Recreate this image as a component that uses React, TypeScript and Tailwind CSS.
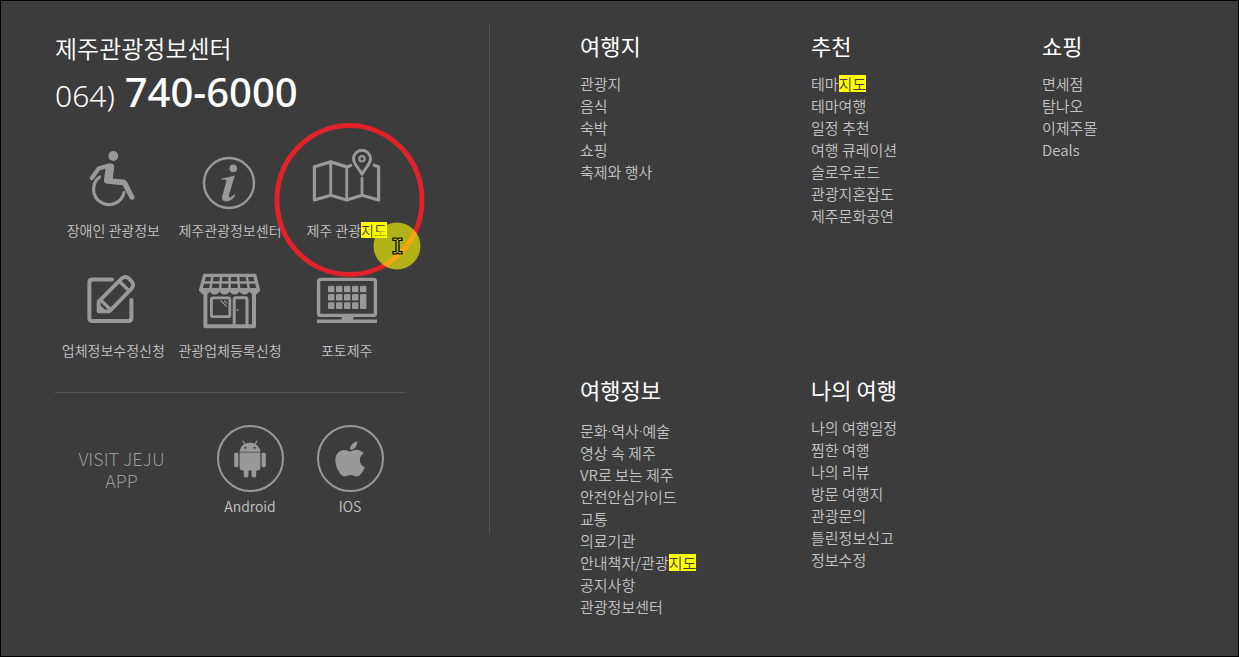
import type { ReactNode } from "react";
import { FaApple } from "react-icons/fa";

const MARK = "지도";

function Dotted({ text }: { text: string }) {
  return (
    <>
      {text.split("·").map((part, i) => (
        <span key={part}>
          {i > 0 && <span className="font-['Noto_Sans',sans-serif]">·</span>}
          {part}
        </span>
      ))}
    </>
  );
}

function Marked({ text, markClass }: { text: string; markClass: string }) {
  if (text.includes("·")) return <Dotted text={text} />;
  if (!text.endsWith(MARK)) return <>{text}</>;
  return (
    <>
      {text.slice(0, -MARK.length)}
      <mark className={markClass}>{MARK}</mark>
    </>
  );
}

function Icon({ children }: { children: ReactNode }) {
  return (
    <svg
      aria-hidden="true"
      width="72"
      height="60"
      viewBox="0 0 72 60"
      fill="none"
      stroke="currentColor"
      strokeWidth="3.2"
      strokeLinecap="round"
      strokeLinejoin="round"
      className="overflow-visible text-[#999999]"
    >
      {children}
    </svg>
  );
}

const WheelchairIcon = () => (
  <Icon>
    <circle cx="36.3" cy="6" r="4.9" fill="currentColor" stroke="none" />
    <path d="M14.8 28 21.6 18.6 32 15.4" strokeWidth="4.2" />
    <path d="M29 14.4 34 13.4Q37.6 13.6 37.2 17L35.8 28.6 46.5 29.4Q49 29.8 50.2 32L57.4 46.6Q58 49.2 55.6 49.8 53.4 50 52.6 48.2L45.6 35.2 30 33.8Q26.4 33.2 27 30Z" fill="currentColor" stroke="none" />
    <path d="M22.6 27A15.4 15.4 0 1 0 47 42.6" />
  </Icon>
);

const InfoIcon = () => (
  <Icon>
    <circle cx="35" cy="33" r="25" strokeWidth="2.4" />
    <circle cx="39.3" cy="18.4" r="3.8" fill="currentColor" stroke="none" />
    <path
      d="M27.6 28.4Q34 27.6 40.8 25.6L35.2 44.4Q34.4 48 36.4 47.4 38 46.8 40 44.2L41.4 45.2Q37.4 51.4 32 51.4 27 51.2 28.2 46L32.4 31.6Q32.8 29.6 30.4 29.6H27.4Z"
      fill="currentColor"
      stroke="none"
    />
  </Icon>
);

const MapIcon = () => (
  <Icon>
    <path d="M39.7 15.5 35.7 16.9 19.7 11.9 3.4 16.7V50L19.7 45.2 35.7 50 51 45.2 67.6 50V16.7L63.2 15.2" strokeWidth="3.2" />
    <path d="M19.7 12V45M35.7 17V50M51 28V45" strokeWidth="2.8" />
    <path d="M51 24.2C48 18.4 42.5 14.4 42.5 8.8A8.5 8.5 0 0 1 59.5 8.8C59.5 14.4 54 18.4 51 24.2Z" strokeWidth="3" />
    <circle cx="51" cy="8.8" r="2.7" strokeWidth="2.2" />
  </Icon>
);

const EditIcon = () => (
  <Icon>
    <path d="M35 9.4H15.4Q12.4 9.4 12.4 12.4V48Q12.4 51 15.4 51H51.4Q54.4 51 54.4 48V30" strokeWidth="4" />
    <path d="M21.6 31.6 45 8.2Q48.4 5.6 51.8 8.4L55 11.8Q57.4 15 54.8 18.4L32.4 41.4H21.6Z" strokeWidth="3.8" />
    <path d="M42.4 11.2 51.8 20.6M24.4 30.6 32.6 38.8" strokeWidth="3.4" />
    <path d="M21.6 35.6 27.4 41.4H21.6Z" fill="currentColor" />
  </Icon>
);

const ShopIcon = () => (
  <Icon>
    <path d="M10.6 5.4H60.8L64.4 20H6.6Z" strokeWidth="3.4" />
    <path d="M8.6 12.4H62.6M18.6 5.4 16.2 20M27.2 5.4 26 20M35.6 5.4V20M44 5.4 45.2 20M52.6 5.4 55 20" strokeWidth="2.5" />
    <path
      d="M5.9 18H65.3V20.4Q64.6 24.4 60.4 24.6 56.4 24.4 55.4 21 54.4 24.4 50.4 24.6 46.4 24.4 45.5 21 44.5 24.4 40.5 24.6 36.5 24.4 35.6 21 34.6 24.4 30.6 24.6 26.6 24.4 25.7 21 24.7 24.4 20.7 24.6 16.7 24.4 15.8 21 14.8 24.4 10.8 24.6 6.5 24.4 5.9 20.4Z"
      fill="currentColor"
      stroke="none"
    />
    <path d="M11.4 24V56.2H60V24" strokeWidth="4" />
    <rect x="17.4" y="27.8" width="18.4" height="18.8" rx="1.4" strokeWidth="2.8" />
    <path d="M40.2 56V29.4Q40.2 27.8 41.8 27.8H51.4Q53 27.8 53 29.4V56" strokeWidth="3" />
    <path d="M27 31 32.6 36.4M30.6 31 32.8 33.2" strokeWidth="1.2" />
    <circle cx="43.6" cy="40" r="0.9" fill="currentColor" stroke="none" />
  </Icon>
);

const MonitorIcon = () => (
  <Icon>
    <rect x="7.6" y="9.4" width="56.8" height="36" rx="2" strokeWidth="3.4" />
    <path d="M30.7 46H42.3V50H30.7ZM6 49.4H66V53H6Z" fill="currentColor" stroke="none" />
    <g fill="currentColor" stroke="none">
      {[15.7, 23.9, 32.3].map((y, row) =>
        [17, 25, 33, 41, 49].map((x, col) =>
          col === 4 && row > 0 ? null : <rect key={`${x}-${y}`} x={x} y={y} width="6.4" height="6.6" rx="1.2" />,
        ),
      )}
      <rect x="49" y="23.9" width="6.4" height="15" rx="1.2" />
    </g>
  </Icon>
);

const AndroidIcon = () => (
  <svg aria-hidden="true" width="34" height="38" viewBox="0 0 34 38" fill="currentColor">
    <path d="M10 1 12.4 5M24 1 21.6 5" stroke="currentColor" strokeWidth="1.2" strokeLinecap="round" />
    <path
      fillRule="evenodd"
      d="M6.6 11.8C7 6.6 11.4 2.8 17 2.8S27 6.6 27.4 11.8ZM12.4 6.7A1.1 1.1 0 1 0 12.4 8.9 1.1 1.1 0 1 0 12.4 6.7ZM21.6 6.7A1.1 1.1 0 1 0 21.6 8.9 1.1 1.1 0 1 0 21.6 6.7Z"
    />
    <path d="M6.6 12.6H27.4V28Q27.4 30.4 25 30.4H9Q6.6 30.4 6.6 28Z" />
    <rect x="1.2" y="12.4" width="4.2" height="15" rx="2.1" />
    <rect x="28.6" y="12.4" width="4.2" height="15" rx="2.1" />
    <rect x="10.8" y="26" width="4.6" height="11.6" rx="2.2" />
    <rect x="18.6" y="26" width="4.6" height="11.6" rx="2.2" />
  </svg>
);

const PointerRings = () => (
  <svg
    aria-hidden="true"
    width="160"
    height="160"
    viewBox="0 0 160 160"
    fill="none"
    className="pointer-events-none absolute -top-[30px] left-1/2 z-10 -ml-[77px] overflow-visible"
  >
    <ellipse cx="79.5" cy="80" rx="72.5" ry="74.5" stroke="#e12229" strokeWidth="5" />
    <circle cx="127" cy="126" r="23.5" fill="#ffff00" fillOpacity="0.6" />
    <path
      d="M123 118H126L127.500 119 129 118H132V120.500H129V131.500H132V134H129L127.500 133 126 134H123V131.500H126V120.500H123Z"
      fill="#b0b01c"
      stroke="#000000"
      strokeWidth="1.2"
    />
  </svg>
);

const services = [
  { label: "장애인 관광정보", icon: <WheelchairIcon /> },
  { label: "제주관광정보센터", icon: <InfoIcon /> },
  { label: "제주 관광지도", icon: <MapIcon />, pointed: true },
  { label: "업체정보수정신청", icon: <EditIcon /> },
  { label: "관광업체등록신청", icon: <ShopIcon /> },
  { label: "포토제주", icon: <MonitorIcon /> },
];

const apps = [
  { label: "Android", icon: <AndroidIcon /> },
  { label: "IOS", icon: <FaApple size={40} aria-hidden="true" /> },
];

const menus = [
  { title: "여행지", listClass: "mt-3", items: ["관광지", "음식", "숙박", "쇼핑", "축제와 행사"] },
  {
    title: "추천",
    listClass: "mt-3",
    items: ["테마지도", "테마여행", "일정 추천", "여행 큐레이션", "슬로우로드", "관광지혼잡도", "제주문화공연"],
  },
  { title: "쇼핑", listClass: "mt-3", items: ["면세점", "탐나오", "이제주몰", "Deals"] },
  {
    title: "여행정보",
    listClass: "mt-[15px]",
    items: [
      "문화·역사·예술",
      "영상 속 제주",
      "VR로 보는 제주",
      "안전안심가이드",
      "교통",
      "의료기관",
      "안내책자/관광지도",
      "공지사항",
      "관광정보센터",
    ],
  },
  {
    title: "나의 여행",
    listClass: "mt-3",
    items: ["나의 여행일정", "찜한 여행", "나의 리뷰", "방문 여행지", "관광문의", "틀린정보신고", "정보수정"],
  },
];

export default function App() {
  return (
    <footer className="flex min-h-screen items-start border border-black bg-[#3c3c3c] pt-6 pl-[54px] font-['Noto_Sans_CJK_KR',sans-serif] font-[350] text-[#c4c4c4]">
      <div className="w-[435px] shrink-0 border-r border-[#555555] pr-[84px] pb-[17px]">
        <h2 className="pt-[7px] text-[24px] leading-8 font-[350] text-white">제주관광정보센터</h2>
        <p className="flex items-baseline gap-[10px] font-['Noto_Sans',sans-serif] leading-[56px] text-white">
          <span className="text-[30px] font-light">064)</span>
          <strong className="text-[40px] font-medium">740-6000</strong>
        </p>

        <ul className="mt-[26px] grid grid-cols-3 gap-y-[30px]">
          {services.map((s) => (
            <li key={s.label} className="relative">
              <a href="#" className="flex flex-col items-center">
                {s.icon}
                <span className="mt-[10px] text-[14px] leading-5 whitespace-nowrap">
                  <Marked text={s.label} markClass="inline-block bg-[#ffff00] leading-4 text-[#3c3c3c]" />
                </span>
              </a>
              {s.pointed && <PointerRings />}
            </li>
          ))}
        </ul>

        <div className="mt-8 flex border-t border-[#555555] pt-8">
          <p className="w-[133px] pt-[22px] text-center text-[18px] leading-[22px] font-light text-[#999999]">
            VISIT JEJU
            <br />
            APP
          </p>
          <ul className="ml-3 flex">
            {apps.map((a) => (
              <li key={a.label} className="w-[100px]">
                <a href="#" className="flex flex-col items-center">
                  <span className="flex size-[67px] items-center justify-center rounded-full border-2 border-[#999999] text-[#999999]">
                    {a.icon}
                  </span>
                  <span className="mt-1 text-[14px] leading-5">{a.label}</span>
                </a>
              </li>
            ))}
          </ul>
        </div>
      </div>

      <nav className="grid flex-1 grid-cols-[1fr_1fr_160px] grid-rows-[344px_auto] pr-[36px] pl-[90px]">
        {menus.map((m) => (
          <section key={m.title}>
            <h3 className="pt-1 text-[22px] leading-8 font-normal text-white">{m.title}</h3>
            <ul className={m.listClass}>
              {m.items.map((item) => (
                <li key={item} className="text-[15px] leading-[22px]">
                  <a href="#">
                    <Marked text={item} markClass="inline-block bg-[#ffff00] leading-[17px] text-[#3c3c3c]" />
                  </a>
                </li>
              ))}
            </ul>
          </section>
        ))}
      </nav>
    </footer>
  );
}
